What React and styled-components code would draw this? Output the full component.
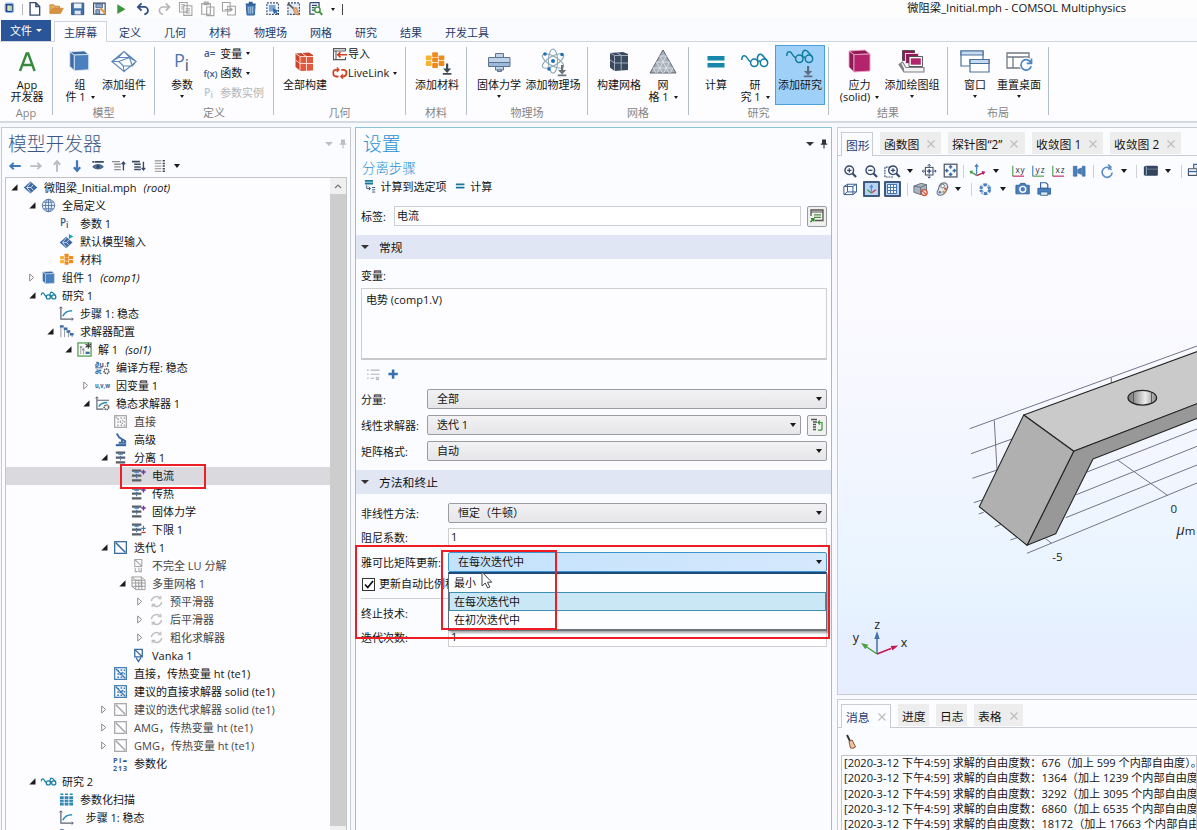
import React from "react";
import styled, { createGlobalStyle, css } from "styled-components";

const Global = createGlobalStyle`
  *, *::before, *::after { box-sizing: border-box; }
  html, body { margin: 0; padding: 0; background: #fbfcff; overflow: hidden; }
  body { font-family: "Open Sans", "Noto Sans CJK SC", sans-serif; font-size: 11px; line-height: 14px; color: #141414; }
`;

/* ---------- icons ---------- */
const navy = "#34496b";
const blue = "#3b78b5";
const teal = "#0f7ba0";

const Cube = ({ front, side, edge }) => (
  <g stroke={edge} strokeWidth="0.9" strokeLinejoin="round">
    <path d="M2 2 L18 1 L23 5 L7 5.6 Z" fill={side} />
    <path d="M2 2 L7 5.6 V23 L2 18 Z" fill={side} />
    <path d="M7 5.6 L23 5 V22 L7 23 Z" fill={front} />
  </g>
);
const Glasses = ({ c = teal, w = 1.5 }) => (
  <g fill="none" stroke={c} strokeWidth={w}>
    <path d="M.8 8 C.8 2.500 4.500 2.500 6.500 6.500 C7.500 8.500 8.500 9.500 9.800 9.800" />
    <circle cx="13.300" cy="10.800" r="3.700" />
    <circle cx="23" cy="10.800" r="3.700" />
    <path d="M16.800 9.500 C17.800 8.800 18.600 8.800 19.400 9.500 M16.600 8.800 L16.400 5.500 C17.500 1 20.500 1.500 22.500 4.500 L26.400 9" />
  </g>
);
const Down = ({ x, y, c = "#56606c" }) => (
  <path d={`M${x - 1} ${y} h2.2 v5 h3 l-4.1 4.4 l-4.1 -4.4 h3 z M${x - 4.2} ${y + 9.6} h8.6 v1.6 h-8.6 z`} fill={c} />
);
const Bars = ({ plus, minus }) => (
  <g>
    <path d="M1 1.5h10v2.4H1zM1 6.8h10v2.4H1zM1 12h10v2.4H1z" fill="#5a5f66" />
    <path d="M3.5 4.500h5M6 3v9" stroke="#3b78b5" strokeWidth="1.2" strokeDasharray="2 1" />
    {plus && <path d="M13.300 1.8v5M10.9 4.3h4.8" stroke="#7b2fa0" strokeWidth="1.5" />}
    {minus && <path d="M13.300 4v5.500M11 6.800h4.6" stroke="#3b78b5" strokeWidth="1.1" />}
    {minus && <path d="M11 11.2h4.6" stroke="#c0392b" strokeWidth="1.3" />}
  </g>
);
const BoxDiag = ({ c, dots }) => (
  <g fill="none" stroke={c}>
    <rect x="1.8" y="1.8" width="12.400" height="12.400" strokeWidth="1.3" />
    {dots ? (
      <path d="M4.500 5h1.8M4.500 8.500h1.8M4.500 12h1.8M8 12h1.8M8 4.300h1.8M11.300 4.500h1.6M11.300 8.300h1.6M3 3l10 10M11 6.500l-4 3" strokeWidth="1.5" strokeDasharray={c === blue ? "none" : "1.6 1.4"} />
    ) : (
      <path d="M3 3l10 10" strokeWidth="1.6" />
    )}
  </g>
);
const Grid3 = ({ s = 1 }) => (
  <g transform={`scale(${s})`}>
    {[[9, 0], [1, 4], [9, 6.5], [17, 4], [1, 11], [9, 13.5], [17, 11]].map(([x, y], i) => (
      <rect key={i} x={x} y={y + 1} width="7.2" height="6" rx="1.2" fill={i % 3 === 1 ? "#f9b233" : "#f08a1c"} />
    ))}
  </g>
);
const Dbl = ({ c = "#9a9a9a" }) => (
  <g fill="none" stroke={c} strokeWidth="1.5">
    <path d="M2.500 7.500 A5.500 5.500 0 0 1 12 4.500 M13.500 8.500 A5.500 5.500 0 0 1 4 11.500" />
    <path d="M12.600 1.800v3.200h-3.200M3.400 14.200v-3.200h3.200" strokeWidth="1.2" />
  </g>
);
const Axes = ({ l }) => (
  <g>
    <path d="M2 2v11.500" stroke={l === "yz" ? blue : "#3f9b3f"} strokeWidth="1.2" />
    <path d="M2 13.500h12.500" stroke={l === "yz" ? "#3f9b3f" : "#c2185b"} strokeWidth="1.2" />
    <text x="5" y="9.500" fontSize="9" fontFamily="Open Sans" fill="#1f2c3d" textLength="10">{l}</text>
  </g>
);
const Mag = ({ k }) => (
  <g fill="none" stroke={navy}>
    <circle cx="7" cy="7" r="4.8" strokeWidth="1.6" />
    <path d="M10.4 10.4L14.5 14.5" strokeWidth="2.4" />
    <path d={k === "-" ? "M4.6 7h4.8" : "M4.6 7h4.8M7 4.6v4.8"} strokeWidth="1.4" />
  </g>
);
const Diamond = () => (
  <g>
    <path d="M8 1.500L.8 8 8 14.500 15.200 8z" fill="#3c68a4" />
    <path d="M8.500 2.5L4 8l4.500 5.5M4 8h4.500L11 5M8.500 8l2.500 3" stroke="#dfe9f6" strokeWidth="0.9" fill="none" />
  </g>
);

const art = {
  app: [16, 16, <g><rect x="2" y="2" width="9" height="9" rx="1" fill="#27408f" /><rect x="5" y="4" width="5" height="6" fill="#9cd6c8" /><rect x="5" y="4" width="2.5" height="5" fill="#f2e58a" /><rect x="2.8" y="1.2" width="9" height="10.5" rx="1.5" fill="none" stroke="#7aa5dc" /></g>],
  file: [16, 16, <path d="M3.2 1.7h6l4 4v9H3.2zM9.2 1.7v4h4" fill="#fff" stroke={navy} strokeWidth="1.4" />],
  open: [16, 16, <g><path d="M1 13V4h4l1 1.5h5V8" fill="#e6b060" stroke="#c8853a" /><path d="M1 13L4 7.5h11L12 13z" fill="#d8923f" stroke="#c07d30" strokeWidth=".6" /></g>],
  save: [16, 16, <g><path d="M1.7 2.2h12.6v12H1.7z" fill="#3f6ea8" stroke="#33527f" /><path d="M4 2.6h8v5H4z" fill="#e9f0f8" /><path d="M4.8 10h6.4v4H4.8z" fill="#dfe8f2" /></g>],
  saveas: [16, 16, <g><path d="M1.7 2.2h12v11.6h-12z" fill="#fff" stroke={navy} strokeWidth="1.2" /><path d="M4 3h7v4H4zM4 9h4v4.5H4z" fill="#8ba9cb" stroke={navy} strokeWidth=".7" /><path d="M8 8.5l5 5 1.6-1.6-5-5z" fill="#e39b3c" /></g>],
  play: [16, 16, <path d="M4.500 3.500l8.500 5-8.500 5z" fill="#3c963c" />],
  undo: [16, 16, <path d="M3.5 6.2h6.2a3.6 3.6 0 0 1 0 7.6M6.8 2.4L3 6.2l3.8 3.8" fill="none" stroke="#2f4f86" strokeWidth="1.9" />],
  redo: [16, 16, <path d="M12.5 6.2H6.3a3.6 3.6 0 0 0 0 7.6M9.2 2.4L13 6.2 9.2 10" fill="none" stroke="#b5b5b5" strokeWidth="1.7" />],
  copy: [16, 16, <path d="M1.5 1.5h8v10h-8zM6 5h8.5v10H6zM8 8h4.6M8 10.2h4.6M8 12.4h4.6M3.2 4h4M3.2 6.2h2M3.2 8.4h2" fill="#fff" fillOpacity=".6" stroke="#a3a3a3" strokeWidth="1.1" />],
  paste: [16, 16, <path d="M1.8 2.8h9v11h-9zM4.5 1.2h4v2.6h-4zM7 6.2h7.5v9H7z" fill="#fff" fillOpacity=".8" stroke="#a3a3a3" strokeWidth="1.2" />],
  dup: [16, 16, <path d="M1.5 1.5h8v9h-8zM7 5.5h8v9H7zM4 8.8h7.5M9.5 6.8l2.3 2-2.3 2" fill="#fff" fillOpacity=".7" stroke="#a0a0a0" strokeWidth="1.1" />],
  trash: [16, 16, <g><path d="M3.4 4.6h9.2l-.8 10H4.2z" fill="#4d84be" stroke="#2f5f99" /><path d="M2.8 3.4h10.4M6 1.7h4" stroke="#2f5f99" strokeWidth="1.6" /><path d="M6 6v7M8 6v7M10 6v7" stroke="#b9d0ea" strokeWidth=".8" /></g>],
  select: [16, 16, <g><rect x="2" y="2" width="12" height="12" fill="none" stroke={navy} strokeWidth="1.2" strokeDasharray="2 1.2" /><rect x="4" y="4" width="7" height="7" fill="#7ea7d6" /><path d="M8 7.5l6.5 2.6-2.6 1.1 2 2.4-1.2.9-1.9-2.4-1.5 1.9z" fill="#2f65a5" /></g>],
  clearsel: [16, 16, <g><rect x="2" y="2" width="12" height="12" fill="#e3ebf6" stroke={navy} strokeWidth="1.2" strokeDasharray="2 1.2" /><path d="M2 2.500l6.500 6" stroke="#555" strokeWidth="1.6" /><path d="M7 7.500l4-.5 2.500 7.500-3.500-.5z" fill="#e9b083" stroke="#b37442" strokeWidth=".8" /></g>],
  find: [16, 16, <g><path d="M2 1.7h9.5v5M2 1.7v12h5M4 4.5h5.5M4 7h3M4 9.5h2.5" fill="none" stroke={navy} strokeWidth="1.3" /><circle cx="9.8" cy="9.2" r="2.8" fill="#fff" stroke="#3c963c" strokeWidth="1.5" /><path d="M11.8 11.2l3 3.2" stroke="#3c963c" strokeWidth="2" /></g>],

  bigA: [26, 26, <path d="M6 22L12.600 4.500h1.6L20.6 22M8.4 16h9.8" fill="none" stroke="#378a3b" strokeWidth="2.4" />],
  component: [26, 26, <Cube front="#4a80bd" side="#3b6ba3" edge="#e2ecf7" />],
  addcomp: [26, 26, <g fill="none" stroke="#5c86b8" strokeWidth="1.100"><path d="M13 2.500L.8 12.500 13 22.500 25.200 12.500zM.8 12.500L7.500 8.500h11l6.700 4M.8 12.500h7l4.500 4.500h9L25.200 12.500M7.500 8.500L13 2.500l5.500 6M13 22.500l-.7-5.500M7.800 12.500l10.700-4M21.300 17l-2.800-8.500" /></g>],
  params: [26, 26, <g><text x="5" y="18" fontSize="18" fontFamily="Open Sans" fill="#4b78a8">P<tspan dy="3.500" fontSize="16" fill="#2e5580">i</tspan></text></g>],
  buildall: [26, 26, <g><path d="M3.5 4.5L17 3.6l4 2.4v15l-12.5 1-5-4z" fill="#c9452c" /><path d="M8 7.5h13v14H8z" fill="#e25a3e" /><path d="M14.5 7v15M8 14.5h13M8 7.5V22M8 7.5h13M3.5 4.5L8 7.5M3.5 11L8 14.5M10 4.2l4.5 3.3" stroke="#fbd9d0" strokeWidth="1" fill="none" /></g>],
  material: [26, 26, <g><g transform="translate(1,2.500)"><Grid3 s={0.8} /></g><Down x={23} y={14.5} c="#3e4956" /></g>],
  solid: [26, 26, <g fill="#bfd2e8" stroke="#5c7492" strokeWidth="1"><path d="M9.5 4.500h8v4h-8zM9.5 17h8v4h-8z" /><path d="M11.500 21h4v1.500h-4z" /><path d="M2.5 8.500h21.5v5H2.5z" /><path d="M2.5 13.500h21.5v4H2.5z" fill="#9db9d9" /></g>],
  physics: [26, 28, <g fill="none" stroke="#8fa9b4" strokeWidth="1.100"><ellipse cx="13" cy="13" rx="4.6" ry="12" /><ellipse cx="13" cy="13" rx="4.6" ry="12" transform="rotate(60 13 13)" /><ellipse cx="13" cy="13" rx="4.6" ry="12" transform="rotate(-60 13 13)" /><g fill="#1c6fb8" stroke="none"><circle cx="13" cy="13" r="2" /><circle cx="5" cy="6" r="1.8" /><circle cx="22" cy="6.5" r="1.8" /><circle cx="9" cy="21" r="1.8" /></g><g stroke="none"><Down x={22} y={17} c="#6b747d" /></g></g>],
  mesh: [26, 26, <g><path d="M4 4l13-1 5 2v16L8.5 22 4 18.5z" fill="#3a4a5e" /><path d="M8.5 6.5H22M8.5 14H22M8.5 6.5V22M15.2 6v16M4 4l4.5 2.5M4 11l4.500 3M10.5 3.5l4.7 2.7" stroke="#aab6c6" strokeWidth="0.9" /></g>],
  tri: [28, 26, <g fill="#a9b1ba" stroke="#4e5a68" strokeWidth="0.9"><path d="M14 1L27 24H1z" /><path d="M10.8 7h6.4M7.4 13h13.2M4 19h20M17.2 7L8 24M20.6 13L14.6 24M24 19l-3 5M10.8 7L20 24M7.4 13l6.2 11M4 19l3 5" stroke="#e3e8ee" strokeWidth=".8" /></g>],
  equals: [26, 26, <path d="M4.500 7h17v4.400h-17zM4.500 14h17v4.400h-17z" fill="#1788ab" />],
  study: [28, 20, <Glasses />],
  addstudy: [28, 28, <g><Glasses /><Down x={22} y={18} c="#5f6e7e" /></g>],
  stress: [26, 26, <Cube front="#b3246c" side="#8f1a55" edge="#e9a5c8" />],
  plotgrp: [28, 26, <g><path d="M1 15.500l5 7.500h20v-4.500H8L4.500 13z" fill="#f2f2f2" stroke="#7b7f84" strokeWidth="1.100" /><path d="M1 15.500l5 7.500v-3.500L3 14z" fill="#7b7f84" /><path d="M4.500 1.500h12v10h-12z" fill="#8f1a55" stroke="#4a4a4a" strokeWidth=".9" /><path d="M7.500 4.500h13v10h-13z" fill="#8f1a55" stroke="#f0d4e2" strokeWidth="1.100" /><path d="M11 7.500h13.500v10H11z" fill="#fff" stroke="#4a4a4a" strokeWidth=".9" /><path d="M12.800 9.300h10v6.400h-10z" fill="#b3246c" /></g>],
  windows: [30, 26, <g fill="#fff" stroke="#48709c" strokeWidth="1.2"><path d="M1 2h22v15H1z" /><path d="M1 2h22v4H1z" fill="#c7d9ee" /><path d="M10 10.500h19V23H10z" /><path d="M10 10.500h19v4H10z" fill="#c7d9ee" /></g>],
  reset: [28, 26, <g fill="none" stroke="#707a84" strokeWidth="1.3"><path d="M2 4h22v15H2zM2 8h22M8 8v11" fill="#fff" /><circle cx="21" cy="15.500" r="7" fill="#fdfdff" stroke="none" /><path d="M26 14a5.200 5.200 0 1 0 .2 3.200M26.500 9.500v4.800h-4.800" stroke="#4a86c5" strokeWidth="1.700" /></g>],

  aeq: [18, 14, <text x="0" y="10.500" fontSize="11" fontWeight="600" fontFamily="Open Sans" fill="#3a5f8c">a=</text>],
  fx: [18, 14, <text x="-.5" y="11" fontSize="10.500" fontWeight="600" fontFamily="Open Sans" fill="#3a5f8c" textLength="15.500">f(x)</text>],
  pigrey: [16, 14, <text x="0" y="10" fontSize="10.500" fontFamily="Open Sans" fontWeight="600" fill="#b9c3ce">P<tspan dy="2" fontSize="9">i</tspan></text>],
  import: [16, 14, <g fill="none" stroke="#5a5a5a" strokeWidth="1.100"><path d="M13.500 4V1.600H1.500v11h12v-2.600M1.500 4h12M4 4v8.500" /><path d="M6 7.800h9M8.500 5.200L5.800 7.800l2.700 2.600" stroke="#cf4326" strokeWidth="1.600" /></g>],
  livelink: [16, 14, <g fill="none" stroke="#cf4326" strokeWidth="1.800"><path d="M6.500 10.500H4.300Q1.300 10.500 1.300 7T4.300 3.800h2.200M9.300 3.800h2Q14.500 3.800 14.500 7T11.300 10.500H9" /><path d="M4.800 1.500L7 3.800 4.800 6M11 8.200L8.800 10.500l2.200 2.300" strokeWidth="1.300" /></g>],

  left: [16, 16, <path d="M14.500 8H3M6.500 4.400L2.600 8l3.900 3.600" fill="none" stroke="#3d78b8" strokeWidth="2.200" />],
  right: [16, 16, <path d="M1.500 8H13M9.500 4.400L13.400 8l-3.900 3.600" fill="none" stroke="#bcbcbc" strokeWidth="2" />],
  up: [16, 16, <path d="M8 14.500V3M4.400 6.500L8 2.600l3.600 3.900" fill="none" stroke="#bcbcbc" strokeWidth="2.200" />],
  down: [16, 16, <path d="M8 1.500V13M4.400 9.500L8 13.400l3.600-3.900" fill="none" stroke="#3d78b8" strokeWidth="2.500" />],
  eye: [16, 16, <g><path d="M1.500 3.200h13" stroke={navy} strokeWidth="2" strokeDasharray="2 .6 12" /><path d="M2 8.800c3.500-3.300 8.500-3.300 12 0-3.500 3.300-8.500 3.300-12 0z" fill="#4f77a8" stroke={navy} /><circle cx="8" cy="8.800" r="2" fill={navy} /></g>],
  listup: [16, 16, <g><path d="M0 3h9M2.500 6h7.500M2.500 9h7.500M2.500 12h7.500" stroke="#8d8d8d" strokeWidth="1.500" /><path d="M13 13V4M11 6l2-2.500L15 6" stroke={navy} fill="none" strokeWidth="1.500" /></g>],
  listdown: [16, 16, <g><path d="M0 3h9M2.500 6h7.500M2.500 9h7.500M2.500 12h7.500" stroke="#3f4d60" strokeWidth="1.800" /><path d="M13 3v9M11 10l2 2.500 2-2.500" stroke={navy} fill="none" strokeWidth="1.500" /></g>],
  listcols: [16, 16, <g><path d="M2 2h7.500M2 5h7.500M2 8h7.500M2 11h7.500M2 14h7.500" stroke="#a8a8a8" strokeWidth="1.500" /><path d="M11 2h2.500M11 5h2.500M11 8h2.500M11 11h2.500M11 14h2.500" stroke="#444" strokeWidth="1.700" /></g>],
  pin: [10, 14, <path d="M2.500 2h5v5H9v1.500H1V7h1.500zM4.300 8.500h1.400V13H4.300z" fill="currentColor" />],

  root: [16, 16, <Diamond />],
  globe: [16, 16, <g fill="#eaf2fb" stroke="#5579a6" strokeWidth="1"><circle cx="8" cy="8" r="6.600" /><path d="M8 1.400v13.200M1.400 8h13.200M2.800 4.500h10.400M2.800 11.500h10.400" /><ellipse cx="8" cy="8" rx="3.200" ry="6.600" fill="none" /></g>],
  treePi: [16, 16, <text x="1" y="11" fontSize="10.500" fontFamily="Open Sans" fontWeight="600" fill="#35588a">P<tspan dy="1.500" fontSize="9.500">i</tspan></text>],
  modelin: [16, 16, <g><g transform="translate(0,1.500) scale(.95)"><Diamond /></g><path d="M10.500 0l4.800 2.600-4.800 2.600z" fill="#17a0b8" /></g>],
  mat: [16, 16, <g transform="translate(.5,1.200)"><Grid3 s={0.6} /></g>],
  comp: [16, 16, <g transform="translate(.5,.8) scale(.6)"><Cube front="#4a80bd" side="#3b6ba3" edge="#dbe7f5" /></g>],
  studyS: [16, 16, <g transform="translate(-.2,3) scale(.6)"><Glasses w={2.1} /></g>],
  step: [16, 16, <g fill="none"><path d="M2 1v13h13" stroke="#5b6470" strokeWidth="1.300" /><path d="M.5 2.500L2 .8l1.500 1.700M13.500 12.500L15.200 14l-1.700 1.500" stroke="#5b6470" /><path d="M4 11c2-5 5-6 10-6" stroke="#2a8cb8" strokeWidth="1.500" /></g>],
  solver: [16, 16, <g><path d="M2 2v12M6 4v10M10 8v6M14 12v2" stroke="#8a929c" strokeWidth="1" /><path d="M1 2.500h4M5 5h4M8 8h4M11.500 11h4" stroke="#3b6ba3" strokeWidth="2.600" /></g>],
  sol: [16, 16, <g><rect x="1" y="1" width="14" height="14" fill="#f8fcf8" stroke="#4a9a4a" strokeWidth="1.300" /><path d="M4 5v8M7 7v6M9.500 10v3" stroke="#999" /><path d="M3 5.500h2.500M5.500 8H8" stroke="#8a929c" strokeWidth="2" /><path d="M9.500 11.500h4" stroke="#3b6ba3" strokeWidth="2.400" /><path d="M12 .8v6.400M9.200 2.400l5.600 3.200M14.800 2.400L9.200 5.600" stroke="#333" strokeWidth="1.100" /></g>],
  eqn: [16, 16, <g><text x="0" y="7" fontSize="7.500" fontWeight="700" fontFamily="Open Sans" fill="#3a5f8c" textLength="15">∂u.f</text><path d="M0 8.300h8" stroke="#3a5f8c" /><text x="0" y="15" fontSize="7" fontWeight="700" fontFamily="Open Sans" fill="#3a5f8c">∂t</text><circle cx="12.200" cy="12" r="2.500" fill="none" stroke="#555" strokeWidth="1.600" strokeDasharray="1.400 .6" /></g>],
  uvw: [16, 16, <text x="0" y="11" fontSize="8" fontWeight="700" fontFamily="Open Sans" fill="#3a5f8c" textLength="16" lengthAdjust="spacingAndGlyphs">u,v,w</text>],
  stat: [16, 16, <g fill="none"><path d="M2 1v13h7M2 4.500h13" stroke="#5b6470" strokeWidth="1.200" /><path d="M.5 2.500L2 .8l1.500 1.700" stroke="#5b6470" /><path d="M4 11.500c2-4 5-4.500 9-4.500" stroke="#2a8cb8" strokeWidth="1.500" /><circle cx="12.200" cy="12" r="2.400" stroke="#555" strokeWidth="1.700" strokeDasharray="1.400 .6" /></g>],
  directG: [16, 16, <BoxDiag c="#a5a5a5" dots />],
  direct: [16, 16, <BoxDiag c={blue} dots />],
  adv: [16, 16, <g><path d="M3 14h11" stroke="#2f65a5" strokeWidth="2.200" /><path d="M6 11.500h7V9.500L6 5.500M4 1.500l3 5M9.500 7v4.500" fill="none" stroke="#3b6ba3" strokeWidth="2" /></g>],
  seg: [16, 16, <g transform="translate(2,0)"><Bars /></g>],
  segP: [16, 16, <Bars plus />],
  segM: [16, 16, <Bars minus />],
  iter: [16, 16, <BoxDiag c="#2f6496" />],
  iterG: [16, 16, <BoxDiag c="#a5a5a5" />],
  ilu: [16, 16, <g fill="none" stroke="#a5a5a5" strokeWidth="1.100"><path d="M4 1.500h7.500v7.500H4zM4.500 2l6.500 6.500M4.500 10.500v4h2.500M8.500 10.500v4h2.500v-4" /></g>],
  mg: [16, 16, <g fill="none" stroke="#9a9a9a" strokeWidth="1"><path d="M1 1h10v10H1zM5 4.500h10v10H5zM1 1l4 3.500M11 1l4 3.500M1 11l4 3.500M1 4.500h8M1 7.500h14M8.300 4.500v10M11.500 4.500v10M5 11h10" /></g>],
  cyc: [16, 16, <Dbl c="#bdbdbd" />],
  vanka: [16, 16, <g fill="none" stroke="#3b6ba3" strokeWidth="1.400"><path d="M4 1.500h8v8H4zM4.500 2l7 7M5.500 10.500l2.500 4 2.500-4" /></g>],
  parz: [16, 16, <text x="0" y="7" fontSize="8" fontFamily="Open Sans" fontWeight="700" fill="#3a5f8c"><tspan textLength="15">Pi=</tspan><tspan x="0" y="15.500" fontSize="7.500" textLength="15">213</tspan></text>],
  sweep: [16, 16, <g><path d="M1.500 2.500h3M6.500 2.500h3M11.500 2.500h3" stroke="#1788ab" strokeWidth="1.600" /><path d="M1 4.500h4v10H1zM6 4.500h4v10H6zM11 4.500h4v10h-4z" fill="#2f86b5" /><path d="M1 8h14M1 11h14" stroke="#e6f1f8" strokeWidth=".8" /></g>],

  eqTo: [16, 16, <g><path d="M1 2h9M1 5h9" stroke="#17789b" strokeWidth="2" /><path d="M3 7v3.500h4M5.200 8.500l2 2-2 2M9 9.500h3.500M9 12h3.500M9 14.500h3.500" stroke="#3d5878" fill="none" strokeWidth="1.100" /></g>],
  eqS: [12, 16, <path d="M1 6h9.500M1 9.600h9.500" stroke="#17789b" strokeWidth="2" />],
  goto: [16, 16, <g fill="none"><path d="M2 8V2h12v10.500H6" stroke="#555" strokeWidth="1.300" /><path d="M2 4h12" stroke="#555" /><path d="M5 6.800h7M5 9.300h7" stroke="#4f8f3a" strokeWidth="1.300" /><path d="M1.500 14l3-3M2 10.800h2.800v2.800" stroke="#2e8b2e" strokeWidth="1.500" /></g>],
  gotoTree: [16, 16, <g fill="none"><path d="M2 2.500h6M4 5h4M4 7.500h3M4 10h3M4 12.500h3" stroke="#555" strokeWidth="1.300" /><path d="M13 13V5.500H9.500M11 3.500L9 5.500l2 2M9 13.200h4" stroke="#3c963c" strokeWidth="1.200" /></g>],
  clearlist: [16, 16, <path d="M1 3.500h2M1 8h2M1 12.500h2M5 3.500h10M5 8h10M5 12.500h4M11 11l3.500 3.500M14.500 11l-3.500 3.500" stroke="#b3b3b3" strokeWidth="1.200" />],
  plus: [12, 12, <path d="M6 .5v11M.5 6h11" stroke="#3570b0" strokeWidth="3" />],
  broom: [14, 16, <g><path d="M2 1l3 6" stroke="#333" strokeWidth="1.900" /><path d="M4 7.300l3.200-1.200L10.500 13q-2.500 2-5 1z" fill="#f0c7a6" stroke="#8a4f30" strokeWidth="1" /></g>],

  zin: [16, 16, <Mag k="+" />],
  zout: [16, 16, <Mag k="-" />],
  zbox: [18, 16, <g><path d="M7 3.500H1v11h10" fill="none" stroke={navy} strokeWidth="1.200" strokeDasharray="2 1" /><g transform="translate(3,0)"><Mag k="+" /></g></g>],
  zsel: [16, 16, <g stroke="#4a5563" fill="none"><rect x="3.800" y="3.800" width="8.400" height="8.400" strokeWidth="1.200" /><path d="M8 5.500v5M5.500 8h5" stroke={navy} strokeWidth="1.500" /><path d="M8 1v2.500M8 12.500V15M1 8h2.500M12.500 8H15" stroke="#4f77a8" strokeWidth="1.300" /><path d="M6.500 1.800L8 .2l1.500 1.600M6.500 14.200L8 15.800l1.500-1.600M1.800 6.500L.2 8l1.600 1.500M14.200 6.500L15.800 8l-1.600 1.500" stroke={navy} strokeWidth="1.100" /></g>],
  zext: [16, 16, <g fill="none"><rect x="1.300" y="1.300" width="13.400" height="13.400" stroke="#4a5563" strokeWidth="1.300" /><path d="M8 3v3M8 10v3M3 8h3M10 8h3M6.300 4.600L8 2.800l1.700 1.800M6.300 11.400L8 13.200l1.700-1.800M4.600 6.300L2.800 8l1.800 1.700M11.400 6.300L13.200 8l-1.800 1.700" stroke="#3b6ba3" strokeWidth="1.400" /></g>],
  axes: [18, 16, <g fill="none" strokeWidth="1.400"><path d="M8 12V2M6.300 4L8 1.800 9.700 4" stroke="#4a86c5" /><path d="M8 13L1.500 9M4 8.500L1.500 8.900l1 2.300" stroke="#3f9b3f" /><path d="M8 13.300l8-3.500M13.500 9l2.700.7-1.500 2.300" stroke="#c2185b" /></g>],
  xy: [17, 16, <Axes l="xy" />],
  yz: [17, 16, <Axes l="yz" />],
  xz: [17, 16, <Axes l="xz" />],
  mirror: [16, 16, <path d="M1.500 2.500h4v11h-4zM6.500 6l4-1.500v7L6.500 10zM11.500 2.500l3 0v11h-3z" fill="#4a7fbd" stroke="#335f95" strokeWidth=".7" />],
  rotate: [16, 16, <path d="M12.800 6.500a5.600 5.600 0 1 0 .7 3M9 .8l3 2.600-3 2.600" fill="none" stroke="#5b8bc0" strokeWidth="1.800" />],
  cam: [18, 16, <g><path d="M1 4q0-1.800 3-1.800h12q1.500 0 1.500 1.500v8.600q0 1.500-1.500 1.500H4q-3 0-3-1.800z" fill="#33455c" /><path d="M5 6h12" stroke="#6f86a3" /><path d="M4 3v10" stroke="#8ba0ba" strokeWidth="1.400" /></g>],
  printcut: [16, 16, <g><path d="M7 1.500h8v9H7z" fill="#dbe6f4" stroke="#3b6ba3" strokeWidth="1.200" /><path d="M1.500 6h9v7h-9z" fill="#fff" stroke="#4a5563" strokeWidth="1.200" /><path d="M1.500 9h9" stroke="#3b6ba3" strokeWidth="1.500" /></g>],
  wire: [16, 16, <path d="M1 5h10v9H1zM5 2.500h10V11H5zM1 5l4-2.500M11 5l4-2.500M1 14l4-3M11 14l4-3" fill="none" stroke="#3b5f95" strokeWidth="1.100" />],
  tAxes: [16, 16, <g fill="none" strokeWidth="1.600"><path d="M8 11V3.500M6.200 5.500L8 3l1.800 2.500" stroke="#5a8fd0" /><path d="M8 12.500L3 8.500" stroke="#3f9b3f" /><path d="M8 12.500l5.500-4" stroke="#d62d6e" /></g>],
  tGrid: [16, 16, <path d="M2 2h12v12H2zM6 2v12M10 2v12M2 6h12M2 10h12" fill="#f2f7fd" stroke="#3b6ba3" strokeWidth="1.200" />],
  cubeNo: [17, 16, <g><path d="M1 4.500L9 1.500l6 1.500V10l-6.500 4L1 11.500z" fill="#a9b4c0" stroke="#5f6b78" /><path d="M1 4.500l7.500 1.500L15 3M8.500 6V14" stroke="#5f6b78" fill="none" /><circle cx="12.500" cy="11.800" r="3.300" fill="#fbe4dd" stroke="#d7502f" strokeWidth="1.400" /><path d="M10.300 9.800l4.400 4.200" stroke="#d7502f" strokeWidth="1.300" /></g>],
  palette: [16, 16, <g><path d="M8.500 1.200c5-1 6.500 3 5 6.500s-3.500 6.500-7 7-5.500-2.500-3.500-5 .5-7.500 5.500-8.500z" fill="#e4e6e8" stroke="#6d7680" strokeWidth="1.300" /><circle cx="8.500" cy="4.500" r="2" fill="#fff" stroke="#6d7680" /><circle cx="5.500" cy="11.500" r="1.500" fill="#4a86c5" /><circle cx="9.500" cy="11" r="1.400" fill="#f08a1c" /><circle cx="11.500" cy="7.500" r="1.300" fill="#d7502f" /></g>],
  shutter: [16, 16, <g fill="none" stroke="#4a7fbd"><circle cx="8" cy="8" r="4.900" strokeWidth="3.400" strokeDasharray="4 1.130" /><path d="M5 5.500L3 2M10.500 5L14 4M11 10.500l2 3M5.500 11L2 12" stroke="#fbfcff" strokeWidth=".9" /></g>],
  photo: [16, 16, <g><path d="M1 4.500h3.500L6 2.500h4.500L12 4.500h3v9H1z" fill="#4a7fbd" stroke="#34639c" /><circle cx="8.200" cy="8.800" r="3.100" fill="#4a7fbd" stroke="#fff" strokeWidth="1.500" /></g>],
  print: [16, 16, <g><path d="M4 .8h6l2 2V7H4z" fill="#fff" stroke="#34639c" strokeWidth="1.300" /><path d="M1 7h14v6.500H1z" fill="#4a7fbd" stroke="#34639c" /><path d="M4 11h8v3.800H4z" fill="#dce8f5" stroke="#34639c" /></g>],
};

const Svg = styled.svg`
  display: block;
  flex: none;
  overflow: visible;
`;
function Icon({ name, scale = 1 }) {
  const [w, h, body] = art[name];
  return <Svg width={w * scale} height={h * scale} viewBox={`0 0 ${w} ${h}`}>{body}</Svg>;
}
const Caret = styled.i`
  flex: none;
  width: 0;
  height: 0;
  border: ${(p) => p.$s || 3.5}px solid transparent;
  border-top: ${(p) => (p.$s || 3.5) + 0.5}px solid ${(p) => p.$c || "#1a1a1a"};
  border-bottom: 0;
`;

/* ---------- frame ---------- */
const Window = styled.div`
  position: relative;
  width: 1197px;
  height: 830px;
  overflow: hidden;
  display: flex;
  flex-direction: column;
  background: #f7f9fd;
`;
const TitleBar = styled.header`
  height: 18px;
  display: flex;
  align-items: center;
  background: #fdfdfe;
  flex: none;
`;
const QuickSlot = styled.span`
  width: ${(p) => p.$w || 21.6}px;
  height: 18px;
  display: flex;
  align-items: center;
  justify-content: center;
  flex: none;
`;
const QuickRule = styled.span`
  width: 1px;
  height: 11px;
  background: ${(p) => p.$c || "#b8b8b8"};
`;
const WindowTitle = styled.h1`
  margin: 0 71px 2px auto;
  font-size: 11.3px;
  font-weight: 400;
  white-space: nowrap;
  letter-spacing: -0.03px;
`;
const TabStrip = styled.nav`
  height: 24px;
  padding-top: 3px;
  display: flex;
  background: #fafbff;
  border-bottom: 1px solid #d0d4dc;
  flex: none;
`;
const FileTab = styled.div`
  margin: -1px 3px 1px 1px;
  width: 50px;
  height: 21px;
  background: #2a5599;
  color: #fff;
  display: flex;
  align-items: center;
  justify-content: center;
  gap: 4px;
`;
const RibbonTab = styled.div`
  height: 21px;
  padding: 3px ${(p) => (p.$active ? 9 : 11.5)}px 0;
  margin-right: ${(p) => (p.$active ? 0.5 : 0)}px;
  display: flex;
  align-items: center;
  color: #243a6b;
  ${(p) => p.$active && css`
    background: #fdfdff;
    border: 1px solid #cfd4de;
    border-bottom: 0;
    padding-top: 2px;
    margin-bottom: -1px;
  `}
`;
const Ribbon = styled.section`
  height: 81px;
  display: flex;
  background: #fdfdff;
  border-bottom: 2px solid #d4dae2;
  flex: none;
`;
const RibbonGroup = styled.div`
  width: ${(p) => p.$w}px;
  height: 68px;
  margin-top: 5px;
  border-right: 1px solid #b3c0cd;
  display: flex;
  flex-direction: column;
  flex: none;
`;
const GroupTools = styled.div`
  height: 59px;
  padding-left: ${(p) => p.$pl}px;
  display: flex;
  align-items: flex-start;
  flex: none;
`;
const GroupName = styled.div`
  height: 14px;
  flex: none;
  text-align: center;
  color: #858585;
`;
const BigButton = styled.button`
  width: ${(p) => p.$w}px;
  height: 60px;
  margin-top: -2px;
  padding: ${(p) => (p.$on ? 2 : 3)}px 0 0;
  border: ${(p) => (p.$on ? "1px solid #4a9fdc" : "0")};
  background: ${(p) => (p.$on ? "#9fd1f8" : "none")};
  font: inherit;
  line-height: 12px;
  color: #141414;
  display: flex;
  flex-direction: column;
  align-items: center;
  flex: none;
  white-space: nowrap;
`;
const BigIcon = styled.span`
  height: 27px;
  display: flex;
  align-items: center;
  justify-content: center;
  margin-bottom: 4px;
`;
const BigLine = styled.span`
  display: flex;
  align-items: center;
  gap: 5px;
  height: ${(p) => (p.$h ? 10 : 12)}px;
`;
const SmallColumn = styled.div`
  margin-left: ${(p) => p.$ml}px;
  margin-top: -3px;
  display: flex;
  flex-direction: column;
`;
const SmallButton = styled.div`
  height: 19.6px;
  display: flex;
  align-items: center;
  color: ${(p) => (p.$off ? "#b4b4b4" : "#141414")};
  white-space: nowrap;
  ${Caret} { margin-left: 4px; }
`;

function Big({ icon, w, lines, on, caret, scale }) {
  return (
    <BigButton $w={w} $on={on}>
      <BigIcon><Icon name={icon} scale={scale} /></BigIcon>
      <BigLine>{lines[0]}</BigLine>
      {lines[1] ? <BigLine>{lines[1]}{caret && <Caret $s={2.5} />}</BigLine> : caret && <BigLine $h><Caret $s={2.5} /></BigLine>}
    </BigButton>
  );
}
function Group({ name, w, pl, children }) {
  return (
    <RibbonGroup $w={w}>
      <GroupTools $pl={pl}>{children}</GroupTools>
      <GroupName>{name}</GroupName>
    </RibbonGroup>
  );
}

const Workspace = styled.main`
  flex: 1;
  min-height: 0;
  display: flex;
  padding-top: 4px;
`;

/* ---------- model tree ---------- */
const TreePanel = styled.section`
  width: 350px;
  margin-left: 1px;
  border: 1px solid #c5c9d0;
  border-bottom: 0;
  background: #fbfcff;
  padding-left: 3px;
  display: flex;
  flex-direction: column;
  flex: none;
`;
const PanelHead = styled.div`
  height: 30px;
  padding: 2px ${(p) => p.$pr}px 0 ${(p) => p.$pl}px;
  display: flex;
  align-items: center;
  color: ${(p) => p.$ink};
  gap: 6px;
`;
const PanelTitle = styled.h2`
  margin: 0 auto 0 0;
  font-size: 18.8px;
  line-height: 24px;
  font-weight: 300;
  color: ${(p) => p.$c};
`;
const TreeTools = styled.div`
  height: 19px;
  padding: 0 0 3px 0;
  display: flex;
  align-items: center;
`;
const ToolSlot = styled.span`
  width: ${(p) => p.$w || 20.7}px;
  height: 16px;
  display: flex;
  align-items: center;
  justify-content: center;
  flex: none;
`;
const TreeBox = styled.div`
  flex: 1;
  min-height: 0;
  margin-right: 3px;
  border: 1px solid #c4c4c4;
  border-bottom: 0;
  background: #fdfdff;
  display: flex;
  overflow: hidden;
`;
const TreeList = styled.ul`
  list-style: none;
  margin: 0;
  padding: 1px 0 0;
  flex: 1;
`;
const TreeRow = styled.li`
  height: 18px;
  padding-left: ${(p) => 2 + p.$level * 18}px;
  display: flex;
  align-items: center;
  white-space: pre;
  color: ${(p) => (p.$dim ? "#454545" : "#141414")};
  background: ${(p) => (p.$on ? "#dad9de" : "none")};
`;
const Twist = styled.span`
  width: 14px;
  height: 16px;
  padding: 0 2px 1px 0;
  display: flex;
  align-items: center;
  justify-content: center;
`;
const NodeIcon = styled.span`
  width: 18px;
  margin-right: 4px;
  display: flex;
  justify-content: center;
`;
const Tag = styled.em`
  margin-left: 7px;
`;
const Scrollbar = styled.div`
  width: 16px;
  background: #cdcdcd;
  border-bottom: 4px solid #f0f0f0;
`;
const ScrollUp = styled.div`
  height: 16px;
  background: #f0f0f0;
  display: flex;
  align-items: center;
  justify-content: center;
`;

const nodes = [
  [0, "o", "root", "微阻梁_Initial.mph", "(root)"],
  [1, "o", "globe", "全局定义"],
  [2, "", "treePi", "参数 1"],
  [2, "", "modelin", "默认模型输入"],
  [2, "", "mat", "材料"],
  [1, "c", "comp", "组件 1", "(comp1)"],
  [1, "o", "studyS", "研究 1"],
  [2, "", "step", "步骤 1: 稳态"],
  [2, "o", "solver", "求解器配置"],
  [3, "o", "sol", "解 1", "(sol1)"],
  [4, "", "eqn", "编译方程: 稳态"],
  [4, "c", "uvw", "因变量 1"],
  [4, "o", "stat", "稳态求解器 1"],
  [5, "", "directG", "直接", "", 1],
  [5, "", "adv", "高级"],
  [5, "o", "seg", "分离 1"],
  [6, "", "segP", "电流", "", 0, 1],
  [6, "", "segP", "传热"],
  [6, "", "segP", "固体力学"],
  [6, "", "segM", "下限 1"],
  [5, "o", "iter", "迭代 1"],
  [6, "", "ilu", "不完全 LU 分解", "", 1],
  [6, "o", "mg", "多重网格 1", "", 1],
  [7, "c", "cyc", "预平滑器", "", 1],
  [7, "c", "cyc", "后平滑器", "", 1],
  [7, "c", "cyc", "粗化求解器", "", 1],
  [6, "", "vanka", "Vanka 1"],
  [5, "", "direct", "直接，传热变量 ht (te1)"],
  [5, "", "direct", "建议的直接求解器 solid (te1)"],
  [5, "c", "iterG", "建议的迭代求解器 solid (te1)", "", 1],
  [5, "c", "iterG", "AMG，传热变量 ht (te1)", "", 1],
  [5, "c", "iterG", "GMG，传热变量 ht (te1)", "", 1],
  [5, "", "parz", "参数化"],
  [1, "o", "studyS", "研究 2"],
  [2, "", "sweep", "参数化扫描"],
  [2, "", "step", "  步骤 1: 稳态"],
  [2, "", "solver", ""],
];

/* ---------- settings ---------- */
const SettingsPanel = styled.section`
  width: 477px;
  margin-left: 4px;
  border: 1px solid #8fc0de;
  border-bottom: 0;
  background: #fbfcff;
  display: flex;
  flex-direction: column;
  flex: none;
`;
const Subtitle = styled.div`
  height: 19px;
  padding: 2px 0 0 6px;
  font-size: 13.4px;
  line-height: 17px;
  font-weight: 300;
  color: #2c8fd3;
`;
const ActionBar = styled.div`
  height: 19px;
  padding-left: 8px;
  display: flex;
  align-items: center;
`;
const ActionText = styled.span`
  margin: 0 ${(p) => p.$mr || 0}px 0 ${(p) => p.$ml}px;
`;
const FieldRow = styled.div`
  height: ${(p) => p.$h}px;
  margin-top: ${(p) => p.$mt || 0}px;
  padding: 0 4px 0 5px;
  display: flex;
  align-items: center;
  white-space: nowrap;
`;
const FieldLabel = styled.label`
  width: ${(p) => p.$w}px;
  padding-top: 1px;
  flex: none;
`;
const TextField = styled.div`
  flex: 1;
  align-self: stretch;
  border: 1px solid #cfcfd4;
  background: #fff;
  padding: 0 0 1px 2px;
  display: flex;
  align-items: center;
`;
const IconButton = styled.button`
  width: 20px;
  height: 21px;
  margin-left: 6px;
  padding: 0;
  border: 1px solid #9b9b9b;
  border-radius: 2px;
  background: #f0f0f1;
  display: flex;
  align-items: center;
  justify-content: center;
`;
const Combo = styled.div`
  flex: 1;
  align-self: stretch;
  border: 1px solid ${(p) => (p.$open ? "#3d94cf" : "#9c9ca0")};
  border-radius: 2px;
  background: ${(p) => (p.$open ? "linear-gradient(90deg, #c3e2fc, #d5e8fd)" : "linear-gradient(#f2f1f4, #e6e6e8)")};
  padding: 0 4px 1px 9px;
  display: flex;
  align-items: center;
  justify-content: space-between;
`;
const SectionHead = styled.div`
  height: 24px;
  margin-top: ${(p) => p.$mt}px;
  padding-left: 5px;
  background: #e1e6f4;
  display: flex;
  align-items: center;
  gap: 10px;
  font-size: 11.8px;
`;
const ListBox = styled.div`
  height: 72px;
  margin: 6px 4px 0 5px;
  padding: 4px;
  border: 1px solid #cfcfd2;
  border-bottom: 2px solid #c8c8cb;
  background: #fdfdff;
`;
const ListTools = styled.div`
  height: 29px;
  padding: 0 0 1px 10px;
  display: flex;
  align-items: center;
  gap: 8px;
`;
const DropHost = styled.div`
  position: relative;
  flex: 1;
  align-self: stretch;
  display: flex;
`;
const DropMenu = styled.div`
  position: absolute;
  z-index: 2;
  left: 0;
  right: 0;
  top: 20px;
  height: 59px;
  border: 1px solid #5d6d7c;
  border-top: 2px solid #1d4a78;
  border-bottom: 2px solid #6c7379;
  background: #fdfeff;
  box-shadow: 2px 2px 2px rgba(0, 0, 0, 0.35);
`;
const DropItem = styled.div`
  height: ${(p) => (p.$on ? 19 : 18)}px;
  padding-left: ${(p) => (p.$on ? 4 : 5)}px;
  display: flex;
  align-items: center;
  border: ${(p) => (p.$on ? "1px solid #3e8fb0" : "0")};
  background: ${(p) => (p.$on ? "#c9e7f5" : "none")};
`;
const CheckBox = styled.span`
  width: 13px;
  height: 13px;
  margin: 0 4px 0 1px;
  border: 1px solid #333;
  background: #fff;
  display: flex;
  align-items: center;
  justify-content: center;
`;
const Divider = styled.hr`
  width: 466px;
  height: 1px;
  margin: 5px 0 0 5px;
  border: 0;
  background: #cfcfd4;
`;

/* ---------- graphics and messages ---------- */
const RightColumn = styled.section`
  flex: 1;
  min-width: 0;
  margin-left: 5px;
  display: flex;
  flex-direction: column;
`;
const Pane = styled.div`
  width: 361px;
  height: ${(p) => p.$h}px;
  margin-bottom: 4px;
  border: 1px solid #c9ccd3;
  background: #fbfcff;
  display: flex;
  flex-direction: column;
  flex: none;
`;
const DocTabs = styled.div`
  height: 28px;
  padding: ${(p) => p.$pt}px 0 0 3px;
  border-bottom: 1px solid #c9ccd3;
  display: flex;
  gap: 7px;
  flex: none;
  white-space: nowrap;
`;
const DocTab = styled.div`
  width: ${(p) => p.$w}px;
  height: ${(p) => (p.$active ? 24 : 22)}px;
  padding: 1px 4px 0;
  font-size: 11.8px;
  display: flex;
  align-items: center;
  gap: 8px;
  background: ${(p) => (p.$active ? "#fbfcff" : "#ededee")};
  border: ${(p) => (p.$active ? "1px solid #c9ccd3" : "0")};
  border-bottom: 0;
  color: ${(p) => (p.$active ? "#1f3d78" : "#141414")};
`;
const CloseMark = () => (
  <Svg width="8" height="8" viewBox="0 0 8 8"><path d="M.5 .5l7 7M7.500 .5l-7 7" stroke="#bcbcbc" strokeWidth="1.100" /></Svg>
);
const GfxTools = styled.div`
  height: 18px;
  margin-top: ${(p) => p.$mt || 0}px;
  padding-left: 2px;
  display: flex;
  align-items: center;
  flex: none;
`;
const ToolRule = styled.span`
  width: 1px;
  height: 13px;
  margin: 0 ${(p) => p.$mr}px 0 ${(p) => p.$ml}px;
  background: #d0d0d4;
  flex: none;
`;
const Toggle = styled.span`
  width: 17px;
  height: 16px;
  margin: 0 2px;
  border: 2px solid #40597f;
  border-radius: 1px;
  background: ${(p) => p.$bg};
  display: flex;
  align-items: center;
  justify-content: center;
  flex: none;
`;
const Canvas = styled.div`
  flex: 1;
  margin-top: 2px;
  background: linear-gradient(#fcfcff 0, #f8f8ff 33%, #f3f6ff 52%, #ebf5ff 70%, #e6f2ff 84%, #e6efff 88%, #e6eeff 100%);
`;
const MessageTools = styled.div`
  height: 27px;
  padding: 6px 0 0 7px;
`;
const MessageBox = styled.div`
  flex: 1;
  margin-left: 3px;
  padding: 0 0 0 2px;
  border: 1px solid #c4c6ca;
  overflow: hidden;
`;
const MessageLine = styled.div`
  height: 15.35px;
  line-height: 13px;
  white-space: nowrap;
  font-size: 11.1px;
`;

function Beam() {
  return (
    <Svg width="359" height="494" viewBox="838 200 359 494">
      <g stroke="#71758a" strokeWidth="1" fill="none">
        <path d="M969.700 428.700L1197 346M971 453.700L1012 439M972.300 478.300L998 469.700M973.700 502.700L982 500M994.300 420.300L997 470M1111.300 377.700V383" />
        <path d="M978.700 514l5-1.700M994.700 527l6.300-2.700M1010.300 540l6.700-2.300M1027 553.300L1197 483M1087 472L1197 429M1076.300 494.700L1197 446.300M1065.700 517.700L1197 465M1117.700 460L1167.700 495.500M1045.700 538.700l5.600 4.300" />
      </g>
      <g stroke="#262626" strokeWidth="1.100" strokeLinejoin="round">
        <path d="M1023.700 415L1200 350.600V402.600L1073.700 451.300Z" fill="#cacaca" />
        <path d="M1073.700 451.300L1200 402.600V417.200L1093 459L1055.700 533.700L1027 545.300Z" fill="#989898" />
        <path d="M1023.700 415L1073.700 451.300L1027 545.300L979.300 506.700Z" fill="#b0b0b0" />
      </g>
      <defs>
        <linearGradient id="bore" x1="0" x2="1"><stop offset="0" stopColor="#777" /><stop offset=".25" stopColor="#9c9c9c" /><stop offset=".6" stopColor="#ececec" /><stop offset="1" stopColor="#8a8a8a" /></linearGradient>
      </defs>
      <ellipse cx="1142.300" cy="397.700" rx="14.300" ry="7.400" fill="url(#bore)" stroke="#262626" strokeWidth="1.300" />
      <path d="M1133.500 392.500v10.500M1151.500 392.500v10.500" stroke="#444" strokeWidth=".8" />
      <g fontFamily="Open Sans" fontSize="11.500" fill="#222">
        <text x="1170.500" y="513">0</text>
        <text x="1052.300" y="560.500">-5</text>
        <text x="1176.500" y="534.500" fontSize="14" fontStyle="italic">μ<tspan fontSize="11.500" fontStyle="normal">m</tspan></text>
        <text x="874.300" y="628.500" fontSize="12.500">z</text>
        <text x="852.800" y="641.500" fontSize="12.500">y</text>
        <text x="900.800" y="646.500" fontSize="12.500">x</text>
      </g>
      <g strokeWidth="1.500">
        <path d="M877 654V638" stroke="#3f73ad" /><path d="M877 631l2.700 8h-5.400z" fill="#3f73ad" />
        <path d="M877 654L866 646.500" stroke="#4aa03f" /><path d="M861 643l7.300 1.800-3 4.400z" fill="#4aa03f" />
        <path d="M877 654L891 648.500" stroke="#c5164f" /><path d="M898.300 645.600l-6 4.900-1.700-4.500z" fill="#c5164f" />
      </g>
    </Svg>
  );
}

/* ---------- annotations ---------- */
const Marker = styled.div`
  position: absolute;
  z-index: 4;
  left: ${(p) => p.$x}px;
  top: ${(p) => p.$y}px;
  width: ${(p) => p.$w}px;
  height: ${(p) => p.$h}px;
  border: 2px solid #ee1c24;
  pointer-events: none;
`;
const Pointer = styled.svg`
  position: absolute;
  z-index: 5;
  left: 481px;
  top: 571px;
  overflow: visible;
`;

const ribbonTabs = ["定义", "几何", "材料", "物理场", "网格", "研究", "结果", "开发工具"];
const quick = ["file", "open", "save", "saveas", "play", "undo", "redo", "copy", "paste", "dup", "trash", "select", "clearsel", "find"];
const log = [
  ["676", "599", "个内部自由度）。"],
  ["1364", "1239", "个内部自由度）。"],
  ["3292", "3095", "个内部自由度）。"],
  ["6860", "6535", "个内部自由度）。"],
  ["18172", "17663", "个内部自由度）。"],
];

export default function App() {
  return (
    <Window lang="zh-CN">
      <Global />
      <TitleBar>
        <QuickSlot $w={20}><Icon name="app" scale={0.9} /></QuickSlot>
        <QuickSlot $w={4}><QuickRule /></QuickSlot>
        {quick.map((q) => <QuickSlot key={q}><Icon name={q} scale={0.96} /></QuickSlot>)}
        <QuickSlot $w={13}><Caret $s={2.5} /></QuickSlot>
        <QuickSlot $w={7}><QuickRule $c="#444" /></QuickSlot>
        <WindowTitle>微阻梁_Initial.mph - COMSOL Multiphysics</WindowTitle>
      </TitleBar>
      <TabStrip>
        <FileTab>文件<Caret $s={3} $c="#fff" /></FileTab>
        <RibbonTab $active>主屏幕</RibbonTab>
        {ribbonTabs.map((t) => <RibbonTab key={t}>{t}</RibbonTab>)}
      </TabStrip>
      <Ribbon>
        <Group name="App" w={53} pl={7}>
          <Big icon="bigA" w={40} lines={["App", "开发器"]} />
        </Group>
        <Group name="模型" w={102} pl={5}>
          <Big icon="component" w={44} lines={["组", "件 1"]} caret scale={0.9} />
          <Big icon="addcomp" w={44} lines={["添加组件"]} caret />
        </Group>
        <Group name="定义" w={119} pl={11}>
          <Big icon="params" w={32} lines={["参数"]} caret />
          <SmallColumn $ml={6}>
            <SmallButton><Icon name="aeq" scale={0.9} />变量<Caret $s={2.5} /></SmallButton>
            <SmallButton><Icon name="fx" scale={0.9} />函数<Caret $s={2.5} /></SmallButton>
            <SmallButton $off><Icon name="pigrey" />参数实例</SmallButton>
          </SmallColumn>
        </Group>
        <Group name="几何" w={132} pl={6}>
          <Big icon="buildall" w={50} lines={["全部构建"]} />
          <SmallColumn $ml={2}>
            <SmallButton><Icon name="import" />导入</SmallButton>
            <SmallButton><Icon name="livelink" />LiveLink<Caret $s={2.5} /></SmallButton>
          </SmallColumn>
        </Group>
        <Group name="材料" w={61} pl={7}>
          <Big icon="material" w={48} lines={["添加材料"]} />
        </Group>
        <Group name="物理场" w={121} pl={7}>
          <Big icon="solid" w={50} lines={["固体力学"]} caret />
          <Big icon="physics" w={58} lines={["添加物理场"]} />
        </Group>
        <Group name="网格" w={101} pl={7}>
          <Big icon="mesh" w={48} lines={["构建网格"]} />
          <Big icon="tri" w={40} lines={["网", "格 1"]} caret />
        </Group>
        <Group name="研究" w={140} pl={8}>
          <Big icon="equals" w={38} lines={["计算"]} />
          <Big icon="study" w={40} lines={["研", "究 1"]} caret />
          <Big icon="addstudy" w={50} lines={["添加研究"]} on />
        </Group>
        <Group name="结果" w={119} pl={8}>
          <Big icon="stress" w={45} lines={["应力", "(solid)"]} caret />
          <Big icon="plotgrp" w={60} lines={["添加绘图组"]} caret />
        </Group>
        <Group name="布局" w={101} pl={10}>
          <Big icon="windows" w={34} lines={["窗口"]} caret />
          <Big icon="reset" w={54} lines={["重置桌面"]} caret />
        </Group>
      </Ribbon>

      <Workspace>
        <TreePanel>
          <PanelHead $pl={3} $pr={3} $ink="#bdbdc2">
            <PanelTitle $c="#3c5580">模型开发器</PanelTitle>
            <Caret $s={4} $c="#bdbdc2" />
            <Icon name="pin" scale={0.8} />
          </PanelHead>
          <TreeTools>
            {["left", "right", "up", "down", "eye", "listup", "listdown", "listcols"].map((t) => (
              <ToolSlot key={t}><Icon name={t} scale={0.88} /></ToolSlot>
            ))}
            <ToolSlot $w={12}><Caret $s={3.5} /></ToolSlot>
          </TreeTools>
          <TreeBox>
            <TreeList>
              {nodes.map(([level, state, icon, text, tag, dim, on], i) => (
                <TreeRow key={i} $level={level} $dim={dim} $on={on}>
                  <Twist>
                    {state === "o" && <Svg width="7" height="7" viewBox="0 0 7 7"><path d="M6.500 .3v6.200H.3z" fill="#1c1c1c" /></Svg>}
                    {state === "c" && <Svg width="6" height="9" viewBox="0 0 6 9"><path d="M.7 1l4 3.500-4 3.500z" fill="#fff" stroke="#8c8c8c" /></Svg>}
                  </Twist>
                  <NodeIcon><Icon name={icon} scale={0.94} /></NodeIcon>
                  <span>{text}</span>
                  {tag ? <Tag>{tag}</Tag> : null}
                </TreeRow>
              ))}
            </TreeList>
            <Scrollbar>
              <ScrollUp><Svg width="8" height="5" viewBox="0 0 8 5"><path d="M1 4l3-3 3 3" fill="none" stroke="#777" strokeWidth="1.200" /></Svg></ScrollUp>
            </Scrollbar>
          </TreeBox>
        </TreePanel>

        <SettingsPanel>
          <PanelHead $pl={7} $pr={3} $ink="#333">
            <PanelTitle $c="#2c8fd3">设置</PanelTitle>
            <Caret $s={4} $c="#333" />
            <Icon name="pin" scale={0.8} />
          </PanelHead>
          <Subtitle>分离步骤</Subtitle>
          <ActionBar>
            <Icon name="eqTo" scale={0.9} />
            <ActionText $ml={2} $mr={9}>计算到选定项</ActionText>
            <Icon name="eqS" scale={0.9} />
            <ActionText $ml={4}>计算</ActionText>
          </ActionBar>
          <FieldRow $h={20} $mt={10}>
            <FieldLabel $w={33}>标签:</FieldLabel>
            <TextField>电流</TextField>
            <IconButton><Icon name="goto" /></IconButton>
          </FieldRow>
          <SectionHead $mt={9}><Caret $s={4} $c="#333" />常规</SectionHead>
          <FieldRow $h={14} $mt={9}><FieldLabel $w={60}>变量:</FieldLabel></FieldRow>
          <ListBox>电势 (comp1.V)</ListBox>
          <ListTools>
            <Icon name="clearlist" scale={0.9} />
            <Icon name="plus" scale={0.85} />
          </ListTools>
          <FieldRow $h={20}>
            <FieldLabel $w={66}>分量:</FieldLabel>
            <Combo>全部<Caret /></Combo>
          </FieldRow>
          <FieldRow $h={20} $mt={6}>
            <FieldLabel $w={66}>线性求解器:</FieldLabel>
            <Combo>迭代 1<Caret /></Combo>
            <IconButton><Icon name="gotoTree" /></IconButton>
          </FieldRow>
          <FieldRow $h={20} $mt={6}>
            <FieldLabel $w={66}>矩阵格式:</FieldLabel>
            <Combo>自动<Caret /></Combo>
          </FieldRow>
          <SectionHead $mt={9}><Caret $s={4} $c="#333" />方法和终止</SectionHead>
          <FieldRow $h={20} $mt={9}>
            <FieldLabel $w={87}>非线性方法:</FieldLabel>
            <Combo>恒定（牛顿）<Caret /></Combo>
          </FieldRow>
          <FieldRow $h={18} $mt={5}>
            <FieldLabel $w={87}>阻尼系数:</FieldLabel>
            <TextField>1</TextField>
          </FieldRow>
          <FieldRow $h={20} $mt={6}>
            <FieldLabel $w={87}>雅可比矩阵更新:</FieldLabel>
            <DropHost>
              <Combo $open>在每次迭代中<Caret /></Combo>
              <DropMenu>
                <DropItem>最小</DropItem>
                <DropItem $on>在每次迭代中</DropItem>
                <DropItem>在初次迭代中</DropItem>
              </DropMenu>
            </DropHost>
          </FieldRow>
          <FieldRow $h={18} $mt={3}>
            <CheckBox><Svg width="10" height="9" viewBox="0 0 10 9"><path d="M1 4.500l2.800 3L9 1" fill="none" stroke="#111" strokeWidth="1.700" /></Svg></CheckBox>
            更新自动比例积
          </FieldRow>
          <Divider />
          <FieldRow $h={20} $mt={4}><FieldLabel $w={87}>终止技术:</FieldLabel></FieldRow>
          <FieldRow $h={20} $mt={4}>
            <FieldLabel $w={87}>迭代次数:</FieldLabel>
            <TextField>1</TextField>
          </FieldRow>
        </SettingsPanel>

        <RightColumn>
          <Pane $h={568}>
            <DocTabs $pt={4}>
              <DocTab $w={32} $active>图形</DocTab>
              <DocTab $w={61}>函数图<CloseMark /></DocTab>
              <DocTab $w={77}>探针图“2”<CloseMark /></DocTab>
              <DocTab $w={71}>收敛图 1<CloseMark /></DocTab>
              <DocTab $w={71}>收敛图 2<CloseMark /></DocTab>
            </DocTabs>
            <GfxTools $mt={6}>
              <ToolSlot><Icon name="zin" scale={0.9} /></ToolSlot>
              <ToolSlot><Icon name="zout" scale={0.9} /></ToolSlot>
              <ToolSlot $w={22}><Icon name="zbox" scale={0.9} /></ToolSlot>
              <ToolSlot $w={13}><Caret /></ToolSlot>
              <ToolSlot $w={26}><Icon name="zsel" scale={0.9} /></ToolSlot>
              <ToolSlot $w={16}><Icon name="zext" scale={0.95} /></ToolSlot>
              <ToolRule $ml={5} $mr={3} />
              <ToolSlot $w={21}><Icon name="axes" scale={0.95} /></ToolSlot>
              <ToolSlot $w={15}><Caret /></ToolSlot>
              <ToolSlot $w={5} />
              <ToolSlot $w={20.3}><Icon name="xy" scale={0.9} /></ToolSlot>
              <ToolSlot $w={20.3}><Icon name="yz" scale={0.9} /></ToolSlot>
              <ToolSlot $w={20.3}><Icon name="xz" scale={0.9} /></ToolSlot>
              <ToolSlot><Icon name="mirror" scale={0.9} /></ToolSlot>
              <ToolRule $ml={3} $mr={3} />
              <ToolSlot><Icon name="rotate" scale={0.9} /></ToolSlot>
              <ToolSlot $w={12}><Caret /></ToolSlot>
              <ToolRule $ml={6} $mr={4} />
              <ToolSlot $w={20}><Icon name="cam" scale={0.85} /></ToolSlot>
              <ToolSlot $w={14}><Caret /></ToolSlot>
              <ToolRule $ml={6} $mr={4} />
              <ToolSlot $w={18}><Icon name="printcut" scale={0.95} /></ToolSlot>
            </GfxTools>
            <GfxTools>
              <ToolSlot><Icon name="wire" scale={0.9} /></ToolSlot>
              <Toggle $bg="#b9d4f3"><Icon name="tAxes" scale={0.8} /></Toggle>
              <Toggle $bg="#b9d4f3"><Icon name="tGrid" scale={0.75} /></Toggle>
              <ToolRule $ml={4} $mr={3} />
              <ToolSlot><Icon name="cubeNo" scale={0.9} /></ToolSlot>
              <ToolSlot><Icon name="palette" scale={0.9} /></ToolSlot>
              <ToolSlot $w={12}><Caret /></ToolSlot>
              <ToolRule $ml={7} $mr={4} />
              <ToolSlot $w={19}><Icon name="shutter" scale={0.9} /></ToolSlot>
              <ToolSlot $w={15}><Caret /></ToolSlot>
              <ToolSlot $w={2} />
              <ToolSlot $w={22}><Icon name="photo" scale={0.95} /></ToolSlot>
              <ToolSlot><Icon name="print" scale={0.9} /></ToolSlot>
            </GfxTools>
            <Canvas><Beam /></Canvas>
          </Pane>
          <Pane $h={140}>
            <DocTabs $pt={4}>
              <DocTab $w={50} $active>消息<CloseMark /></DocTab>
              <DocTab $w={31}>进度</DocTab>
              <DocTab $w={31}>日志</DocTab>
              <DocTab $w={49}>表格<CloseMark /></DocTab>
            </DocTabs>
            <MessageTools><Icon name="broom" /></MessageTools>
            <MessageBox>
              {log.map(([a, b, tail]) => (
                <MessageLine key={a}>[2020-3-12 下午4:59] 求解的自由度数：{a}（加上 {b} {tail}</MessageLine>
              ))}
            </MessageBox>
          </Pane>
        </RightColumn>
      </Workspace>

      <Marker $x={120} $y={464} $w={86} $h={25} />
      <Marker $x={355} $y={545} $w={475} $h={94} />
      <Marker $x={441} $y={550} $w={116} $h={80} />
      <Pointer width="12" height="18" viewBox="0 0 12 18">
        <path d="M1 1v14l3.300-3 2.300 5 2.200-1-2.300-4.800h4.300z" fill="#fff" stroke="#444" strokeWidth="1" />
      </Pointer>
    </Window>
  );
}
